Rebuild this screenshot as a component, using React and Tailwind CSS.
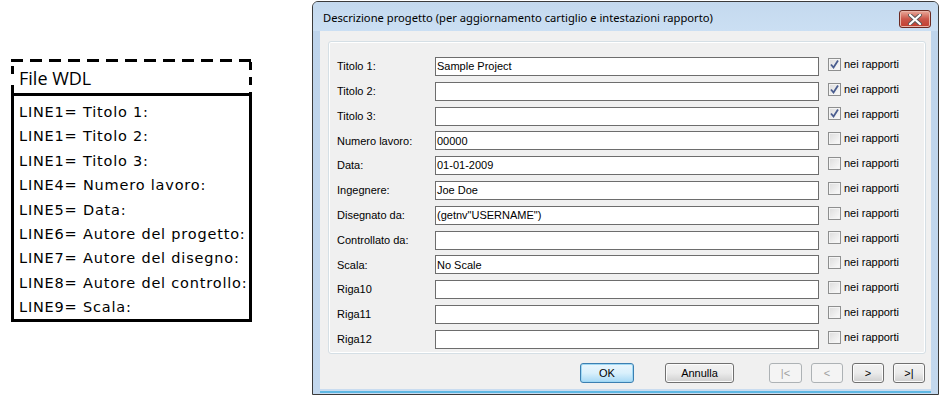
import React from "react";

const rows = [
  ["Titolo 1:", "Sample Project", true],
  ["Titolo 2:", "", true],
  ["Titolo 3:", "", true],
  ["Numero lavoro:", "00000", false],
  ["Data:", "01-01-2009", false],
  ["Ingegnere:", "Joe Doe", false],
  ["Disegnato da:", '(getnv"USERNAME")', false],
  ["Controllato da:", "", false],
  ["Scala:", "No Scale", false],
  ["Riga10", "", false],
  ["Riga11", "", false],
  ["Riga12", "", false],
];

const wdl = [
  "LINE1= Titolo 1:",
  "LINE1= Titolo 2:",
  "LINE1= Titolo 3:",
  "LINE4= Numero lavoro:",
  "LINE5= Data:",
  "LINE6= Autore del progetto:",
  "LINE7= Autore del disegno:",
  "LINE8= Autore del controllo:",
  "LINE9= Scala:",
];

function Check({ checked }) {
  return (
    <div className="w-[13px] h-[13px] border border-[#8e8f8f] bg-gradient-to-br from-[#dcdcdc] to-[#fbfbfb] flex items-center justify-center shrink-0">
      <div className="w-[11px] h-[11px] border border-[#f4f4f4] flex items-center justify-center">
        {checked && (
          <svg width="9" height="9" viewBox="0 0 9 9">
            <path d="M1 4.5 L3.5 7.5 L8 0.5" fill="none" stroke="#4a5d8f" strokeWidth="1.8" />
          </svg>
        )}
      </div>
    </div>
  );
}

function Btn({ children, w, disabled, def, className = "" }) {
  const base = def
    ? "border-[#3c7fb1] bg-gradient-to-b from-[#eaf6fd] via-[#d9f0fc] to-[#a7d9f5] shadow-[inset_0_0_0_1px_#9fd8f4]"
    : disabled
    ? "border-[#adb2b5] bg-[#f4f4f4] text-[#a0a0a0]"
    : "border-[#707070] bg-gradient-to-b from-[#f2f2f2] via-[#ebebeb] to-[#cfcfcf] shadow-[inset_0_0_0_1px_#fcfcfc]";
  return (
    <div
      className={`h-[20px] rounded-[3px] border flex items-center justify-center text-[11px] ${base} ${disabled ? "" : "text-black"} ${className}`}
      style={{ width: w }}
    >
      {children}
    </div>
  );
}

export default function App() {
  return (
    <div className="w-[940px] h-[396px] bg-white flex items-start overflow-hidden">
      {/* Left WDL box */}
      <div className="ml-[11px] mt-[59px] w-[241px] flex flex-col" style={{ fontFamily: '"DejaVu Sans", sans-serif' }}>
        <div className="h-[3px] bg-[repeating-linear-gradient(90deg,#000_0_12px,transparent_12px_19px)]" />
        <div className="h-[31px] flex">
          <div className="w-[3px] h-full bg-[repeating-linear-gradient(180deg,transparent_0_4px,#000_4px_12px,transparent_12px_19px)]" />
          <div className="flex-1 flex items-center pl-[5px] pt-[1px]">
            <span className="text-[18px] text-black" style={{ fontFamily: '"Open Sans", sans-serif' }}>File WDL</span>
          </div>
          <div className="w-[3px] h-full bg-[repeating-linear-gradient(180deg,#000_0_8px,transparent_8px_15px)]" />
        </div>
        <div className="border-[3px] border-black h-[229px] pt-[4px] pl-[5px]">
          {wdl.map((t) => (
            <div key={t} className="h-[24.4px] leading-[24.4px] text-[14.5px] tracking-[0.8px] text-black whitespace-nowrap">
              {t}
            </div>
          ))}
        </div>
      </div>

      {/* Dialog */}
      <div className="ml-[60px] mt-px w-[627px] h-[394px] border border-[#3b3b3b] rounded-t-[6px] bg-[#bfd5ec] flex flex-col overflow-hidden">
        <div className="h-[29px] shrink-0 bg-gradient-to-b from-[#c4d9ee] to-[#cbdff3] flex items-start justify-between pl-[10px] pr-[7px]">
          <span className="mt-[8px] text-[11.2px] text-black" style={{ fontFamily: '"Noto Sans", sans-serif' }}>
            Descrizione progetto (per aggiornamento cartiglio e intestazioni rapporto)
          </span>
          <div className="mt-[8px] w-[32px] h-[18px] rounded-[3px] border border-[#6b2a22] bg-gradient-to-b from-[#e9a99b] via-[#c9564a] to-[#c33e2e] flex items-center justify-center shadow-[inset_0_0_0_1px_#eab5a9]">
            <svg width="14" height="11" viewBox="0 0 14 11">
              <path d="M2 1 L12 10 M12 1 L2 10" stroke="#5a5a5a" strokeWidth="4" strokeLinecap="round" />
              <path d="M2 1 L12 10 M12 1 L2 10" stroke="#ffffff" strokeWidth="2.2" strokeLinecap="round" />
            </svg>
          </div>
        </div>
        <div className="flex-1 flex px-[7px] bg-gradient-to-b from-[#bed4eb] to-[#c3d8ee]">
          <div className="flex-1 flex flex-col">
            <div className="flex-1 bg-[#f0f0f0] pl-[8px] pr-[5px] pt-[10px] flex flex-col" style={{ fontFamily: '"Liberation Sans", Arial, sans-serif' }}>
              <div className="h-[313px] border border-[#d5dfe5] rounded-[3px] shadow-[inset_0_0_0_1px_#ffffff] pt-[15px] pl-[8px] flex flex-col gap-[5.8px]">
                {rows.map(([label, value, checked]) => (
                  <div key={label} className="h-[19px] flex items-start">
                    <div className="w-[98px] h-[19px] flex items-center text-[11px] text-black whitespace-nowrap">{label}</div>
                    <div className="w-[384px] h-[19px] bg-white border border-[#6d6d6d] flex items-center pl-[1px] text-[11px] text-black whitespace-nowrap">
                      {value}
                    </div>
                    <div className="ml-[9px] -mt-px flex items-center gap-[3px]">
                      <Check checked={checked} />
                      <span className="text-[11px] text-black whitespace-nowrap">nei rapporti</span>
                    </div>
                  </div>
                ))}
              </div>
              <div className="mt-[9px] flex items-start">
                <Btn w="54px" def className="ml-[252px]">OK</Btn>
                <Btn w="69px" className="ml-[31px]">Annulla</Btn>
                <Btn w="33px" disabled className="ml-[35px]">|&lt;</Btn>
                <Btn w="32px" disabled className="ml-[9px]">&lt;</Btn>
                <Btn w="32px" className="ml-[9px]">&gt;</Btn>
                <Btn w="32px" className="ml-[9px]">&gt;|</Btn>
              </div>
            </div>
            <div className="h-[5px] shrink-0 flex flex-col">
              <div className="h-[2px] bg-[#c9dcf0]" />
              <div className="h-[2px] bg-[#5fb8e3]" />
              <div className="h-[1px] bg-[#c9dcf0]" />
            </div>
          </div>
        </div>
      </div>
    </div>
  );
}
